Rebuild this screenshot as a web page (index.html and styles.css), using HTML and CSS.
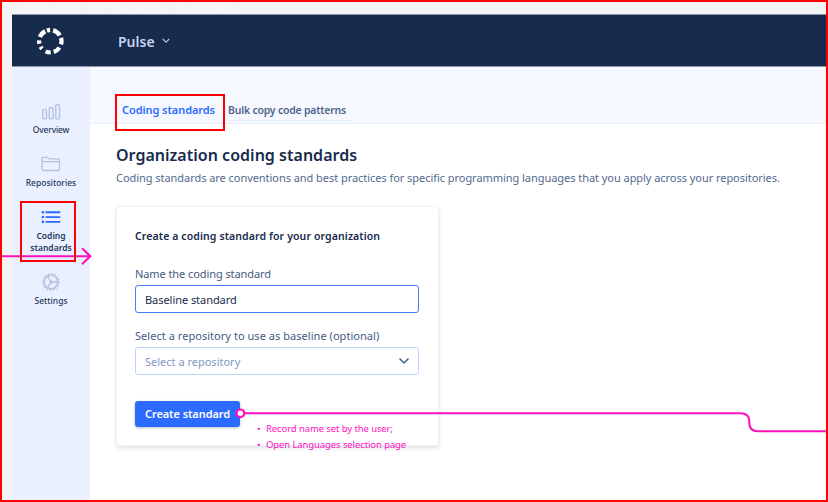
FILE: index.html
```html
<!DOCTYPE html>
<html lang="en">
<head>
<meta charset="utf-8">
<title>Coding standards</title>
<link rel="stylesheet" href="styles.css">
</head>
<body>
<div class="canvas">
  <div class="frame-title">Landing page code standards - no standards</div>
  <header class="topbar">
    <svg class="logo" viewBox="0 0 30 30"><circle cx="15.300" cy="15.200" r="11.200" fill="none" stroke="#fff" stroke-width="4.300" pathLength="360" stroke-dasharray="34 18 37 16 27 22 13 16 18 18 41 9 17 16 43 15" stroke-dashoffset="17"/></svg>
    <span class="org">Pulse</span>
    <svg class="org-arrow" viewBox="0 0 8 6"><path d="M.8 1 4 4.300 7.200 1" fill="none" stroke="#c3d0e8" stroke-width="1.100"/></svg>
  </header>
  <div class="shell">
    <nav class="sidebar">
      <a class="nav overview">
        <svg viewBox="0 0 20 18"><g fill="none" stroke="#b4c3df" stroke-width="1.400"><rect x="1.700" y="7.600" width="3.800" height="9.300" rx="1"/><rect x="8.300" y="5.700" width="3.800" height="11.200" rx="1"/><rect x="14.800" y="2.700" width="3.800" height="14.200" rx="1"/></g></svg>
        <span>Overview</span>
      </a>
      <a class="nav repos">
        <svg viewBox="0 0 20 18"><path d="M1 14V3.600q0-1.300 1.200-1.300h4.300l1.700 1.500h9q1.300 0 1.300 1.300v9q0 1.400-1.400 1.400H2.400Q1 15.500 1 14zM1 6.600h17.500" fill="none" stroke="#b4c3df" stroke-width="1.300"/></svg>
        <span>Repositories</span>
      </a>
      <a class="nav standards active">
        <svg viewBox="0 0 20 18"><path d="M4.500 4.300H19.300M4.500 9.100H19.300M4.500 13.900H19.300" stroke="#2c6bff" stroke-width="1.900"/><g fill="#2c6bff"><circle cx="1.900" cy="4.300" r="1.300"/><circle cx="1.900" cy="9.100" r="1.300"/><circle cx="1.900" cy="13.900" r="1.300"/></g></svg>
        <span>Coding<br>standards</span>
      </a>
      <a class="nav settings">
        <svg viewBox="0 0 20 18"><g fill="none" stroke="#b4c3df"><circle cx="10" cy="9" r="6.700" stroke-width="1.500"/><circle cx="10" cy="9" r="8.100" stroke-width="1.700" pathLength="64" stroke-dasharray="2 2"/><circle cx="10" cy="9" r="1.700" fill="#b4c3df" stroke="none"/><path d="M10 9h6.500M10 9 6.700 3.400M10 9l-3.300 5.600" stroke-width="1.300"/></g></svg>
        <span>Settings</span>
      </a>
    </nav>
    <main class="main">
      <div class="tabs">
        <span class="tab current">Coding standards</span>
        <span class="tab other">Bulk copy code patterns</span>
      </div>
      <div class="content">
        <h1>Organization coding standards</h1>
        <p class="lead">Coding standards are conventions and best practices for specific programming languages that you apply across your repositories.</p>
        <section class="card">
          <h2>Create a coding standard for your organization</h2>
          <label class="label name-label">Name the coding standard</label>
          <div class="field focused"><span class="value">Baseline standard</span></div>
          <label class="label repo-label">Select a repository to use as baseline (optional)</label>
          <div class="field"><span class="placeholder">Select a repository</span><svg class="arrow" viewBox="0 0 12 8"><path d="M1.500 1.500 6 6l4.500-4.500" fill="none" stroke="#45608f" stroke-width="1.500"/></svg></div>
          <button class="create"><span>Create standard</span></button>
        </section>
      </div>
    </main>
  </div>
  <svg class="flow" viewBox="0 0 828 502"><g fill="none" stroke="#ff10bd" stroke-width="2.100"><path d="M2 256.200H90M82 248.200l8.300 8-8.300 8" /><path d="M244 413.300H740Q749.300 413.300 749.300 421V423Q749.300 431.200 758 431.200H826"/><circle cx="240.400" cy="413.300" r="3.800" fill="#fff" stroke-width="2.200"/></g></svg>
  <ul class="notes"><li>Record name set by the user;</li><li>Open Languages selection page</li></ul>
  <div class="mark mark-tab"></div>
  <div class="mark mark-nav"></div>
  <div class="mark mark-page"></div>
</div>
</body>
</html>
```
FILE: styles.css
```css
* { box-sizing: border-box; }
body { margin: 0; font-family: "Noto Sans", sans-serif; color: #172b4d; }
.canvas { position: relative; width: 828px; height: 502px; overflow: hidden; background: #f4f4f4; padding-left: 12px; display: flex; flex-direction: column; }
.frame-title { height: 14px; font-size: 10.8px; line-height: 14px; color: #fafafa; white-space: nowrap; }
.topbar { height: 53px; flex: none; background: #172b4d; border: solid #8e98aa; border-width: 1px 0; display: flex; align-items: center; padding-left: 23px; }
.logo { width: 30px; height: 30px; }
.org { font-size: 14px; font-weight: 600; color: #c3d3f2; margin-left: 53px; width: 38px; white-space: nowrap; padding-top: 2px; }
.org-arrow { width: 8px; height: 6px; margin-left: 6px; margin-top: 1px; }
.shell { flex: 1; display: flex; min-height: 0; }
.sidebar { width: 78px; background: #eaf0ff; flex: none; padding-top: 35px; }
.nav { display: flex; flex-direction: column; align-items: center; font-size: 8.5px; line-height: 12px; font-weight: 500; text-align: center; height: 53px; white-space: nowrap; color: #26395c; }
.nav svg { width: 20px; height: 18px; display: block; margin-bottom: 4px; }
.nav.overview span { letter-spacing: -.2px; }
.nav.standards { height: 65px; font-weight: 600; }
.main { flex: 1; background: #fff; min-width: 0; }
.tabs { height: 57px; background: #f5f8ff; border-bottom: 1px solid #e8effd; display: flex; align-items: flex-end; padding: 0 0 2px 32px; line-height: 16px; font-weight: 600; white-space: nowrap; }
.tab { padding-bottom: 3px; }
.tab.current { color: #2c6bff; width: 106px; font-size: 11px; letter-spacing: -.07px; }
.tab.other { color: #50658c; width: 124px; font-size: 10.5px; letter-spacing: -.22px; border-bottom: 1px solid #e8eefa; padding-bottom: 2px; }
.content { padding: 20px 0 0 26px; white-space: nowrap; }
h1 { margin: 0; font-size: 16px; line-height: 22px; font-weight: 600; letter-spacing: .02px; }
.lead { margin: 4px 0 0; font-size: 11px; line-height: 16px; color: #526990; letter-spacing: -.047px; }
.card { margin-top: 20px; width: 323px; height: 240px; background: #fff; border: 1px solid #edf1f8; border-radius: 3px; box-shadow: 0 2px 4px rgba(23,43,77,.14); padding: 21px 19px 0 18px; display: flex; flex-direction: column; align-items: flex-start; }
h2 { margin: 0 0 22px; font-size: 10.5px; line-height: 16px; font-weight: 600; letter-spacing: .11px; }
.label { font-size: 11px; line-height: 16px; color: #455b83; }
.name-label { margin-bottom: 3px; letter-spacing: -.08px; }
.repo-label { margin: 15px 0 3px; letter-spacing: .04px; }
.field { width: 284px; height: 28px; border: 1px solid #bfd3ff; border-radius: 3px; display: flex; align-items: center; justify-content: space-between; padding: 0 8px 0 9px; font-size: 11px; flex: none; }
.focused { border-color: #477dff; }
.value { letter-spacing: -.05px; }
.placeholder { color: #8498c2; }
.arrow { width: 12px; height: 8px; }
.create { margin-top: 26px; width: 105px; height: 26px; border: 0; border-radius: 3px; background: #2c6bff; color: #fff; font: 600 11px "Noto Sans", sans-serif; letter-spacing: -.08px; padding: 0 0 1px 10px; text-align: left; white-space: nowrap; box-shadow: 0 1px 3px rgba(23,43,77,.3); }
.flow { position: absolute; left: 0; top: 0; width: 828px; height: 502px; }
.notes { position: absolute; left: 257px; top: 421px; margin: 0; padding: 0; list-style: none; font-size: 9.5px; line-height: 15.5px; letter-spacing: -.1px; color: #ff10bd; white-space: nowrap; }
.notes li::before { content: "•"; display: inline-block; width: 9px; font-size: 9.5px; }
.mark { position: absolute; border: 2px solid #f00; }
.mark-tab { left: 115px; top: 94px; width: 110px; height: 37px; }
.mark-nav { left: 20px; top: 201px; width: 56px; height: 61px; }
.mark-page { left: 0; top: 0; width: 828px; height: 502px; }
```
